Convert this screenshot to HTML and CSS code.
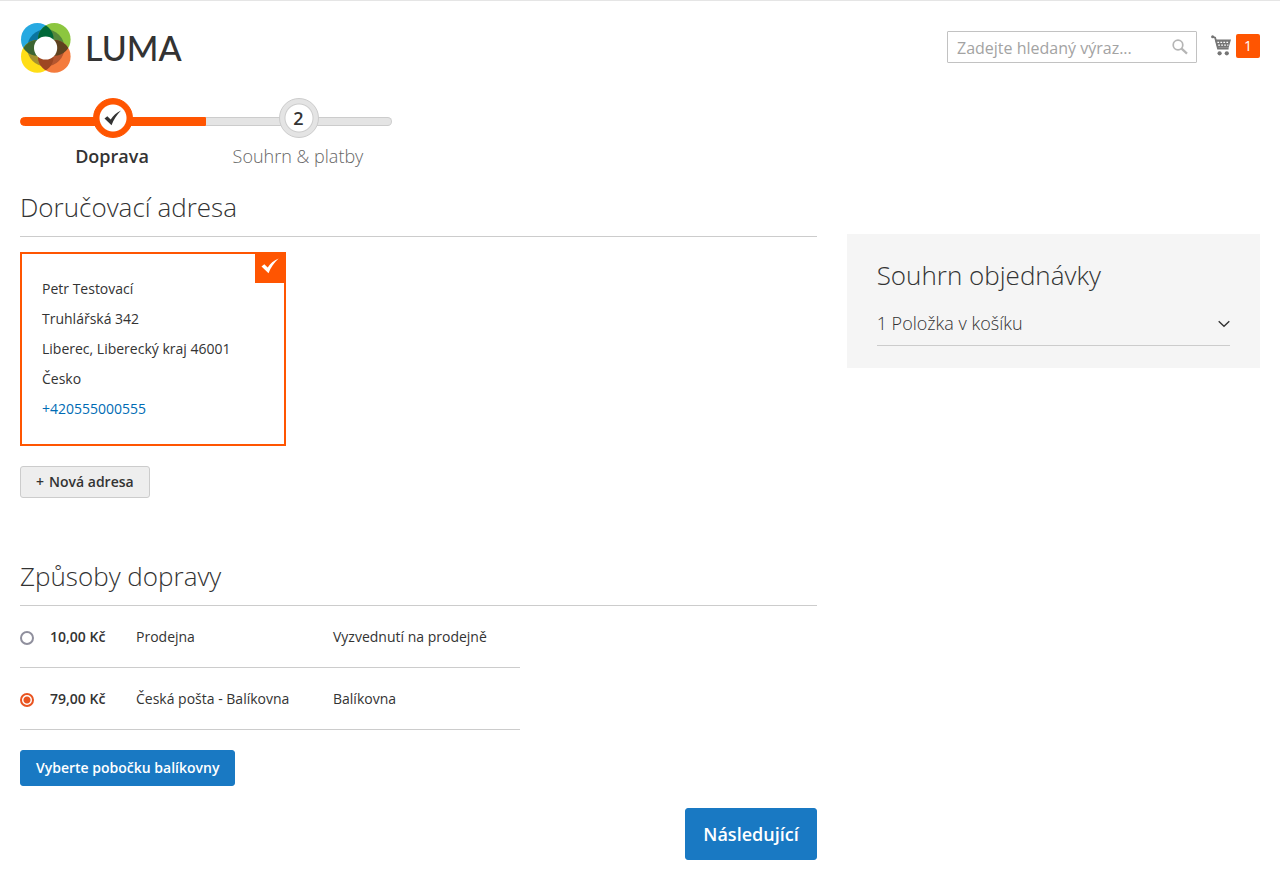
FILE: index.html
```html
<!DOCTYPE html>
<html lang="cs">
<head>
<meta charset="utf-8">
<title>Doprava</title>
<link rel="stylesheet" href="styles.css">
</head>
<body>
<header class="header">
  <a class="logo" href="#" aria-label="Luma">
    <svg class="logo-mark" width="52" height="52" viewBox="20 22 52 52" aria-hidden="true">
      <defs>
        <clipPath id="blue"><circle cx="37.3" cy="39.4" r="16.3"/></clipPath>
        <clipPath id="green"><circle cx="54.3" cy="39.4" r="16.3"/></clipPath>
        <clipPath id="yellow"><circle cx="37.3" cy="56.4" r="16.3"/></clipPath>
        <clipPath id="orange"><circle cx="54.3" cy="56.4" r="16.3"/></clipPath>
      </defs>
      <circle cx="37.3" cy="39.4" r="16.3" fill="#27a9e1"/>
      <circle cx="54.3" cy="39.4" r="16.3" fill="#8cc63f"/>
      <circle cx="37.3" cy="56.4" r="16.3" fill="#ffde17"/>
      <circle cx="54.3" cy="56.4" r="16.3" fill="#f47b3d"/>
      <circle cx="45.8" cy="47.9" r="18.6" fill="#0a759f" clip-path="url(#blue)"/>
      <circle cx="45.8" cy="47.9" r="18.6" fill="#55873b" clip-path="url(#green)"/>
      <circle cx="45.8" cy="47.9" r="18.6" fill="#a5912f" clip-path="url(#yellow)"/>
      <circle cx="45.8" cy="47.9" r="18.6" fill="#b5562f" clip-path="url(#orange)"/>
      <circle cx="37.3" cy="39.4" r="16.3" fill="#006838" clip-path="url(#green)"/>
      <circle cx="37.3" cy="39.4" r="16.3" fill="#3c6532" clip-path="url(#yellow)"/>
      <circle cx="54.3" cy="56.4" r="16.3" fill="#5e421f" clip-path="url(#green)"/>
      <circle cx="54.3" cy="56.4" r="16.3" fill="#9e4722" clip-path="url(#yellow)"/>
      <circle cx="45.6" cy="48" r="11.6" fill="#fff"/>
    </svg>
    <span class="logo-text">LUMA</span>
  </a>
  <div class="header-tools">
    <form class="search">
      <input class="search-input" type="text" aria-label="Hledat" placeholder="Zadejte hledaný výraz...">
      <button class="search-button" type="button" aria-label="Hledat">
        <svg width="16" height="16" viewBox="0 0 16 16" fill="none" stroke="#b5b5b5"><circle cx="6" cy="6" r="4.8" stroke-width="1.7"/><path d="M9.6 9.6 15 14.6" stroke-width="2.2"/></svg>
      </button>
    </form>
    <a class="cart" href="#" aria-label="Košík">
      <svg width="20" height="22" viewBox="0 -1 20 22" aria-hidden="true">
        <path d="M1.3 1.6 4.1 2.6 7 13.6H17.6" fill="none" stroke="#757575" stroke-width="1.8"/>
        <circle cx="1.6" cy="1.8" r="1.5" fill="#757575"/>
        <path d="M4 4.6H20L17.6 12.8H6.4Z" fill="#757575"/>
        <path d="M6.4 7.3H18.4M7.2 10.2H17.4" fill="none" stroke="#fff" stroke-width="1.3" stroke-dasharray="1.7 1.3"/>
        <circle cx="8.6" cy="18.3" r="2.1" fill="#757575"/><circle cx="15.8" cy="18.3" r="2.1" fill="#757575"/>
      </svg>
      <span class="cart-count">1</span>
    </a>
  </div>
</header>

<ol class="progress">
  <li class="step step-active">
    <span class="step-bar"><span class="step-dot"><svg width="18" height="16" viewBox="0 0 18 16"><path d="M.5 8.4 3.3 6.2 6.7 9.6C9.2 5.6 12.6 2.2 17 .4 12.9 4.5 9.8 9.4 7.5 15.2Z" fill="#333"/></svg></span></span>
    <span class="step-label">Doprava</span>
  </li>
  <li class="step">
    <span class="step-bar"><span class="step-dot">2</span></span>
    <span class="step-label">Souhrn &amp; platby</span>
  </li>
</ol>

<div class="checkout">
  <main class="main">
    <section class="section">
      <h2 class="title">Doručovací adresa</h2>
      <address class="address">
        Petr Testovací<br>Truhlářská 342<br>Liberec, Liberecký kraj 46001<br>Česko<br><a href="tel:+420555000555">+420555000555</a>
        <span class="address-check"><svg width="18" height="16" viewBox="0 0 18 16"><path d="M.5 8.4 3.3 6.2 6.7 9.6C9.2 5.6 12.6 2.2 17.6 .4 13.2 4.5 9.8 9.4 7.5 15.2Z" fill="#fff"/></svg></span>
      </address>
      <button class="button button-light" type="button"><span class="plus">+</span>Nová adresa</button>
    </section>

    <section class="section-shipping">
      <h2 class="title">Způsoby dopravy</h2>
      <table class="methods">
        <tr>
          <td class="col-radio"><input class="radio" type="radio" name="method" id="store"></td>
          <td class="col-price"><label for="store">10,00 Kč</label></td>
          <td class="col-name">Prodejna</td>
          <td>Vyzvednutí na prodejně</td>
        </tr>
        <tr>
          <td class="col-radio"><input class="radio" type="radio" name="method" id="post" checked></td>
          <td class="col-price"><label for="post">79,00 Kč</label></td>
          <td class="col-name">Česká pošta - Balíkovna</td>
          <td>Balíkovna</td>
        </tr>
      </table>
      <button class="button button-primary" type="button">Vyberte pobočku balíkovny</button>
      <div class="actions"><button class="button button-primary button-large" type="button">Následující</button></div>
    </section>
  </main>

  <aside class="summary">
    <h2 class="summary-title">Souhrn objednávky</h2>
    <button class="summary-items" type="button">
      <span>1 Položka v košíku</span>
      <svg width="12" height="8" viewBox="0 0 12 8" fill="none" stroke="#333" stroke-width="1.4"><path d="M.7 1.2 6 6.2 11.3 1.2"/></svg>
    </button>
  </aside>
</div>
</body>
</html>
```

FILE: styles.css
```css
* { box-sizing: border-box; }

body {
  margin: 0;
  padding: 0 20px 20px;
  border-top: 1px solid #e5e5e5;
  background: #fff;
  color: #333;
  font: 14px/20px "Open Sans", "Noto Sans", sans-serif;
}

button, input { font-family: inherit; color: inherit; }
button { cursor: pointer; }
svg { display: block; }

.header {
  display: flex;
  justify-content: space-between;
  align-items: flex-start;
  padding-top: 21px;
}
.logo {
  display: flex;
  align-items: center;
  gap: 13px;
  color: #333;
  text-decoration: none;
}
.logo-text { font: 500 34px/52px Lato, sans-serif; }
.header-tools { display: flex; gap: 14px; padding-top: 8px; }
.search { position: relative; width: 250px; margin-top: 1px; }
.search-input {
  width: 100%;
  height: 32px;
  padding: 2px 35px 0 9px;
  border: 1px solid #c2c2c2;
  border-radius: 1px;
  background: #fff;
  font-size: 16px;
}
.search-input::placeholder { color: #a3a3a3; opacity: 1; }
.search-button {
  position: absolute;
  top: 8px;
  right: 9px;
  padding: 0;
  border: 0;
  background: none;
}
.cart {
  display: flex;
  gap: 5px;
  align-items: flex-start;
  padding-top: 4px;
  text-decoration: none;
}
.cart-count {
  width: 24px;
  border-radius: 2px;
  background: #ff5501;
  color: #fff;
  line-height: 24px;
  text-align: center;
}

.progress {
  display: flex;
  width: 372px;
  margin: 24px 0 20px;
  padding: 0;
  list-style: none;
}
.step { flex: 1; text-align: center; }
.step-bar {
  display: flex;
  justify-content: center;
  align-items: center;
  height: 9px;
  margin: 19px 0 18px;
  border: 1px solid #ccc;
  border-left: 0;
  border-radius: 0 6px 6px 0;
  background: #e4e4e4;
}
.step-dot {
  display: flex;
  flex: none;
  justify-content: center;
  align-items: center;
  width: 40px;
  height: 40px;
  margin-bottom: 8px;
  border: 1px solid #ccc;
  border-radius: 50%;
  background: radial-gradient(circle, #fff 13px, #ccc 14px, #e4e4e4 15px);
  font-size: 18px;
  font-weight: 600;
}
.step-label {
  display: block;
  padding-right: 2px;
  color: #666;
  font-size: 18px;
  font-weight: 300;
  line-height: 25px;
}
.step-active .step-bar {
  border-color: #ff5501;
  border-left: 1px solid #ff5501;
  border-radius: 6px 0 0 6px;
  background: #ff5501;
}
.step-active .step-dot {
  border-color: #ff5501;
  background: radial-gradient(circle, #fff 13px, #ff5501 14px);
}
.step-active .step-label { color: #333; font-weight: 600; }

.checkout {
  display: grid;
  grid-template-columns: 2fr 1fr;
  align-items: start;
}
.main { padding-right: 30px; }
.title {
  margin: 0;
  padding-bottom: 11px;
  border-bottom: 1px solid #ccc;
  font-size: 26px;
  font-weight: 300;
  line-height: 36px;
}
.address {
  position: relative;
  width: 266px;
  margin: 15px 0 20px;
  padding: 20px;
  border: 2px solid #ff5501;
  font-style: normal;
  line-height: 30px;
}
.address a { color: #006bb4; text-decoration: none; }
.address-check {
  position: absolute;
  top: -1px;
  right: -1px;
  width: 30px;
  padding: 5px 6px 9px;
  background: #ff5501;
}
.button {
  border: 1px solid;
  border-radius: 3px;
  font-size: 14px;
  font-weight: 600;
  line-height: 16px;
}
.button-light {
  padding: 7px 15px;
  border-color: #ccc;
  background: #eee;
}
.plus { margin-right: 5px; }
.section { margin-bottom: 60px; }
.methods {
  width: 500px;
  margin-bottom: 20px;
  border-spacing: 0;
}
.methods td {
  height: 62px;
  padding: 0;
  border-bottom: 1px solid #ccc;
}
.col-radio { width: 30px; }
.col-price { width: 86px; font-weight: 600; }
.col-name { width: 197px; }
.radio {
  display: block;
  width: 14px;
  height: 14px;
  margin: 2px 0 0;
  appearance: none;
  border: 2px solid #8f8f9d;
  border-radius: 50%;
  background: #fff;
}
.radio:checked {
  border-color: #e95420;
  background: radial-gradient(circle, #e95420 3px, #fff 4px);
}
.button-primary {
  padding: 9px 15px;
  border-color: #1979c3;
  background: #1979c3;
  color: #fff;
}
.actions { display: flex; justify-content: flex-end; margin-top: 22px; }
.button-large { padding: 14px 17px; font-size: 18px; line-height: 22px; }

.summary {
  margin-top: 45px;
  padding: 22px 30px;
  background: #f5f5f5;
}
.summary-title {
  margin: 0 0 11px;
  font-size: 26px;
  font-weight: 300;
  line-height: 38px;
}
.summary-items {
  display: flex;
  justify-content: space-between;
  align-items: center;
  width: 100%;
  padding: 6px 0 9px;
  border: 0;
  border-bottom: 1px solid #ccc;
  background: none;
  font-size: 18px;
  font-weight: 300;
  line-height: 25px;
}
```
